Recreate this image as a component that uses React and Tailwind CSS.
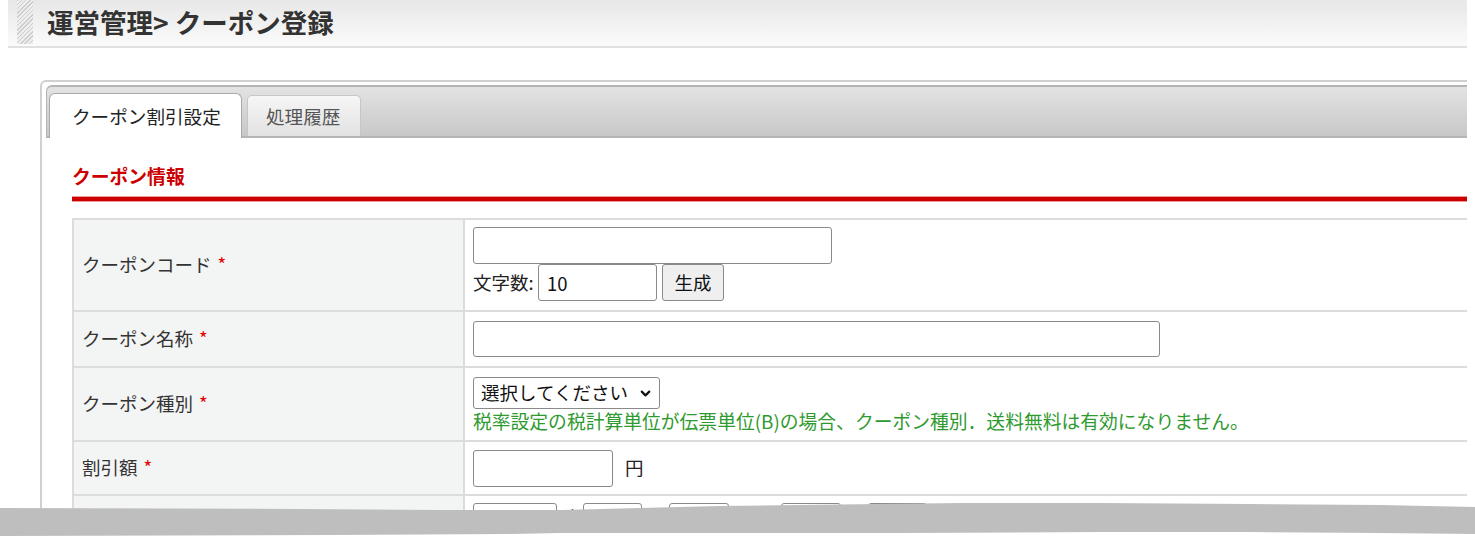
import { ChevronDown } from 'lucide-react'

const font = "font-['Noto_Sans_CJK_JP','Noto_Sans',sans-serif]"

function Req() {
  return <span className="ml-[6px] text-[#e60000]">*</span>
}

function Label({ children, req = true }) {
  return (
    <div className="flex w-[391px] shrink-0 items-center border-r-2 border-[#dcdcdc] bg-[#f3f4f4] pl-[8px] text-[18.5px] text-[#333]">
      <span>{children}</span>
      {req && <Req />}
    </div>
  )
}

function Field({ className = '', value = '' }) {
  return (
    <input
      type="text"
      defaultValue={value}
      className={`rounded-[3px] border border-[#8a8a8a] bg-white px-[8px] text-[18.5px] text-[#111] outline-none ${className}`}
    />
  )
}

export default function App() {
  return (
    <div className={`relative h-[538px] w-[1475px] overflow-hidden bg-white ${font}`}>
      <div className="w-[1467px] overflow-hidden">
        {/* page header */}
        <div className="ml-[8px] flex h-[48px] items-start border-b-2 border-[#e0e0e0] bg-gradient-to-b from-[#e7e7e7] to-[#fbfbfb]">
          <div className="ml-[9px] h-[44px] w-[16px] bg-[repeating-linear-gradient(135deg,#cdcdcd_0px,#cdcdcd_1px,#ededed_1px,#ededed_3px)]" />
          <h1 className="ml-[14px] mt-[6px] text-[26.5px] font-bold leading-[32px] text-[#333]">
            運営管理&gt; クーポン登録
          </h1>
        </div>

        {/* panel */}
        <div className="ml-[40px] mt-[32px] w-[1480px] rounded-tl-[6px] border-l-2 border-t-2 border-[#d0d0d0] pl-[4px] pt-[3px]">
          <div className="flex h-[53px] items-end gap-[5px] rounded-tl-[6px] border-y-2 border-l border-[#b5b5b5] bg-gradient-to-b from-[#e3e3e3] to-[#c8c8c8] pl-[2px]">
            <div className="-mb-[2px] flex h-[45px] w-[193px] items-center rounded-t-[6px] border border-b-0 border-[#a9a9a9] bg-white pl-[22px] text-[18.6px] text-[#222]">
              クーポン割引設定
            </div>
            <div className="flex h-[41px] w-[114px] items-center rounded-t-[5px] border border-b-0 border-[#c6c6c6] bg-gradient-to-b from-[#f6f6f6] to-[#e2e2e2] pl-[18px] text-[18.6px] text-[#555]">
              処理履歴
            </div>
          </div>

          <div className="pl-[26px]">
            <h2 className="mt-[26px] text-[18.8px] font-bold leading-[24px] text-[#cc0000]">クーポン情報</h2>
            <div className="mt-[8px] h-[6px] border-y border-[#ee9a9a] bg-[#cc0000]" />

            {/* form table */}
            <div className="mt-[16px] border-l-2 border-t-2 border-[#dcdcdc] text-[18.5px] text-[#222]">
              <div className="flex h-[92px] border-b-2 border-[#dcdcdc]">
                <Label>クーポンコード</Label>
                <div className="flex flex-col pl-[8px] pt-[7px]">
                  <Field className="h-[37px] w-[359px]" />
                  <div className="flex items-center">
                    <span className="w-[65px] leading-[37px]">文字数:</span>
                    <Field className="h-[37px] w-[119px]" value="10" />
                    <button className="ml-[5px] h-[37px] w-[62px] rounded-[3px] border border-[#8a8a8a] bg-[#efefef] text-[18.5px] text-[#111]">
                      生成
                    </button>
                  </div>
                </div>
              </div>

              <div className="flex h-[56px] border-b-2 border-[#dcdcdc]">
                <Label>クーポン名称</Label>
                <div className="flex items-center pl-[8px]">
                  <Field className="h-[36px] w-[687px]" />
                </div>
              </div>

              <div className="flex h-[74px] border-b-2 border-[#dcdcdc]">
                <Label>クーポン種別</Label>
                <div className="flex flex-col pl-[8px] pt-[9px]">
                  <div className="flex h-[32px] w-[187px] items-center justify-between rounded-[3px] border border-[#8a8a8a] bg-white pl-[7px] pr-[6px] text-[#111]">
                    <span>選択してください</span>
                    <ChevronDown size={15} strokeWidth={3.5} className="text-[#111]" />
                  </div>
                  <p className="whitespace-nowrap text-[18.8px] leading-[24px] text-[#2f9a2f]">
                    税率設定の税計算単位が伝票単位(B)の場合、クーポン種別．送料無料は有効になりません。
                  </p>
                </div>
              </div>

              <div className="flex h-[54px] border-b-2 border-[#dcdcdc]">
                <Label>割引額</Label>
                <div className="flex items-center pl-[8px]">
                  <Field className="h-[37px] w-[140px]" />
                  <span className="ml-[12px]">円</span>
                </div>
              </div>

              <div className="flex h-[60px]">
                <Label>有効期間</Label>
                <div className="flex items-start pl-[8px] pt-[7px]">
                  <Field className="h-[37px] w-[84px]" />
                  <span className="w-[26px] text-center">/</span>
                  <Field className="h-[37px] w-[59px]" />
                  <span className="w-[27px] text-center">/</span>
                  <Field className="h-[37px] w-[60px]" />
                  <span className="w-[52px] text-center">~</span>
                  <Field className="h-[37px] w-[60px] bg-[#e8e8e8]" />
                  <span className="w-[27px] text-center">:</span>
                  <Field className="h-[37px] w-[59px] bg-[#e8e8e8]" />
                </div>
              </div>
            </div>
          </div>
        </div>
      </div>

      {/* torn edge of the screenshot */}
      <svg className="absolute left-0 top-[498px]" width="1475" height="40" viewBox="0 0 1475 40">
        <polygon
          fill="#ffffff"
          points="0,30 1475,30 1475,40 0,40"
        />
        <polygon
          fill="#bebebe"
          points="0,10 300,11 440,12 562,12 640,10 720,8 800,7 960,5 1100,5 1250,6 1380,7 1475,9 1475,36 1380,35 1250,34 1100,34 900,35 700,35 560,35 510,36 330,37 0,38"
        />
      </svg>
    </div>
  )
}
